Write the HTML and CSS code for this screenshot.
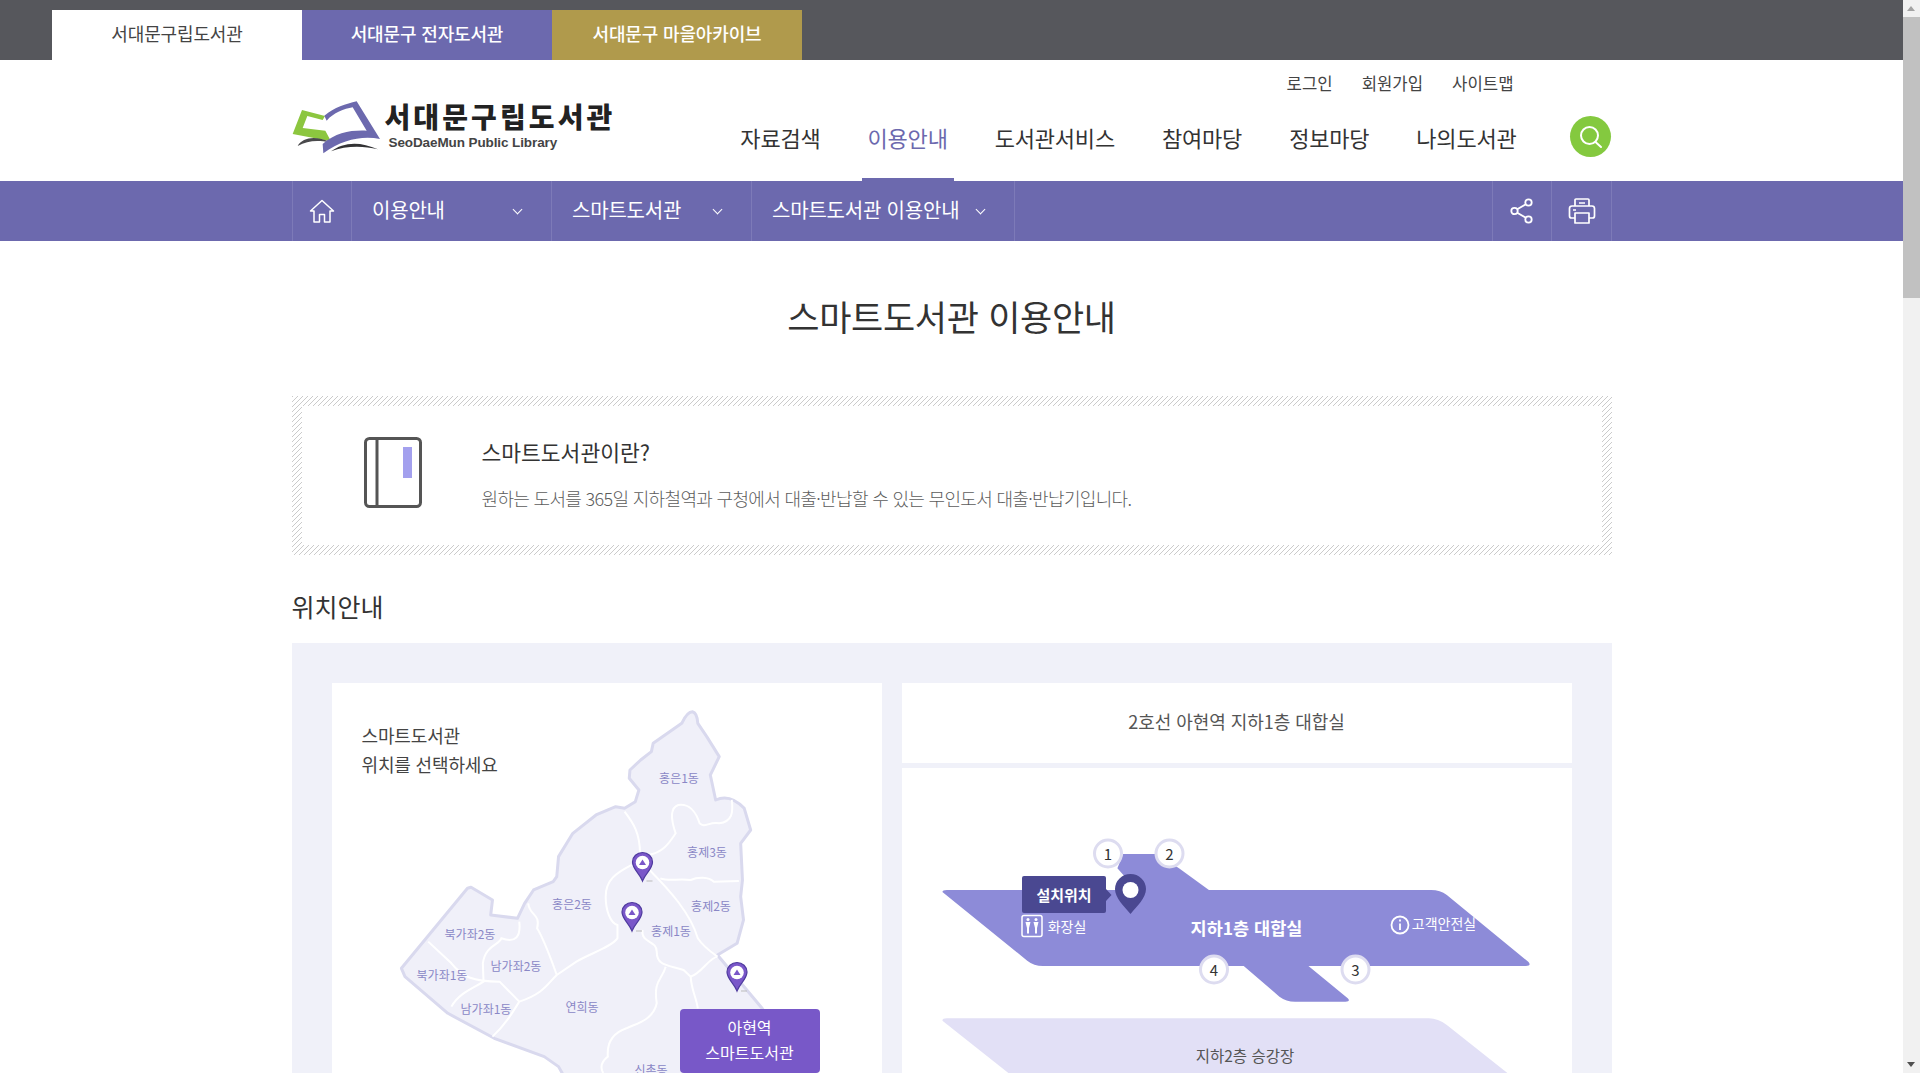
FILE: index.html

```html
<!DOCTYPE html>
<html lang="ko">
<head>
    <meta charset="UTF-8">
    <meta name="viewport" content="width=device-width, initial-scale=1.0">
    <title>스마트도서관 이용안내 - 서대문구립도서관</title>
    <link rel="stylesheet" href="styles.css">
</head>
<body>
<div class="window">
    <div class="page">
        <div class="topbar">
            <a class="top-tab tab-home">서대문구립도서관</a>
            <a class="top-tab tab-ebook">서대문구 전자도서관</a>
            <a class="top-tab tab-archive">서대문구 마을아카이브</a>
        </div>

        <header class="header">
            <a class="logo">
                <svg class="logo-mark" viewBox="38 28 270 165" aria-hidden="true">
                    <path fill="#8cc63f" d="M68 58 L137 76 L130 88 L84 76 L70 112 L138 120 L155 152 L40 130 Z"/>
                    <path fill="#4a4a4c" d="M55 166 C70 140 110 134 152 155 C112 148 85 150 55 166 Z"/>
                    <path fill="#6c69ae" d="M135 75 C165 50 200 40 232 32 L302 145 C250 135 190 145 132 188 L130 160 C170 125 215 118 262 120 L220 50 C195 54 162 67 142 90 Z"/>
                    <path fill="#333335" d="M155 182 C190 155 240 150 296 176 C250 165 200 165 155 182 Z"/>
                </svg>
                <span class="logo-text">
                    <strong>서대문구립도서관</strong>
                    <em>SeoDaeMun Public Library</em>
                </span>
            </a>
            <div class="header-right">
                <ul class="util">
                    <li>로그인</li>
                    <li>회원가입</li>
                    <li>사이트맵</li>
                </ul>
                <div class="gnb-row">
                    <nav class="gnb">
                        <a>자료검색</a>
                        <a class="on">이용안내</a>
                        <a>도서관서비스</a>
                        <a>참여마당</a>
                        <a>정보마당</a>
                        <a>나의도서관</a>
                    </nav>
                    <button class="search-btn" type="button" aria-label="검색">
                        <svg width="28" height="28" viewBox="0 0 28 28" fill="none" stroke="#fff" stroke-width="2" stroke-linecap="round">
                            <circle cx="13.500" cy="12.500" r="8.500"/>
                            <path d="M19.500 19 L25 24"/>
                        </svg>
                    </button>
                </div>
            </div>
        </header>

        <div class="subnav">
            <div class="subnav-inner">
                <a class="sub-icon">
                    <svg width="26" height="24" viewBox="0 0 26 24" fill="none" stroke="#fff" stroke-width="1.5" stroke-linejoin="round">
                        <path d="M1.5 12 L13 1.5 L24.5 12 H21 V23 H15.5 V15.5 H10.5 V23 H5 V12 Z"/>
                    </svg>
                </a>
                <a class="sub-item w200">이용안내<i class="chev"></i></a>
                <a class="sub-item w200">스마트도서관<i class="chev"></i></a>
                <a class="sub-item w263">스마트도서관 이용안내<i class="chev"></i></a>
                <span class="sub-space"></span>
                <a class="sub-icon">
                    <svg width="24" height="26" viewBox="0 0 24 26" fill="none" stroke="#fff" stroke-width="1.8">
                        <circle cx="18.5" cy="4.5" r="3.2"/>
                        <circle cx="4.5" cy="13" r="3.2"/>
                        <circle cx="18.5" cy="21.5" r="3.2"/>
                        <path d="M7.2 11.3 L15.8 6.2 M7.2 14.7 L15.8 19.8"/>
                    </svg>
                </a>
                <a class="sub-icon sub-print">
                    <svg width="28" height="26" viewBox="0 0 28 26" fill="none" stroke="#fff" stroke-width="1.7" stroke-linejoin="round">
                        <path d="M7 8 V2 Q7 1 8 1 H20 Q21 1 21 2 V8"/>
                        <path d="M7 20 H3.5 Q1.5 20 1.5 18 V10.5 Q1.5 8 4 8 H24 Q26.500 8 26.500 10.500 V18 Q26.500 20 24.500 20 H21"/>
                        <path d="M7 15 H21 V25 H7 Z"/>
                        <path d="M11 5 H17 M5 12 H8"/>
                    </svg>
                </a>
            </div>
        </div>

        <main class="content">
            <h2 class="page-title">스마트도서관 이용안내</h2>

            <section class="intro">
                <div class="intro-inner">
                    <svg class="intro-icon" width="58" height="71" viewBox="0 0 58 71" fill="none">
                        <rect x="1.500" y="1.500" width="55" height="68" rx="4" stroke="#555" stroke-width="3"/>
                        <path d="M13 2 V69" stroke="#555" stroke-width="3"/>
                        <rect x="39" y="10" width="9" height="31" fill="#a3a0ee"/>
                    </svg>
                    <div class="intro-text">
                        <h3>스마트도서관이란?</h3>
                        <p>원하는 도서를 365일 지하철역과 구청에서 대출·반납할 수 있는 무인도서 대출·반납기입니다.</p>
                    </div>
                </div>
            </section>

            <h3 class="section-title">위치안내</h3>

            <section class="location">
                <div class="map-card">
                    <p class="map-guide">스마트도서관<br>위치를 선택하세요</p>
                    <svg class="map" width="550" height="700" viewBox="0 0 550 700">
                        <defs>
                            <g id="map-pin">
                                <path d="M4 0 H10" stroke="#bbb" stroke-width="1"/>
                                <path d="M0 0 C-3 -8 -10 -12 -10 -19 A10 9.500 0 1 1 10 -19 C10 -12 3 -8 0 0 Z" fill="#7a57c9" stroke="#4e3a9e" stroke-width="1.200"/>
                                <circle cx="0" cy="-18.500" r="6.800" fill="#fff"/>
                                <path d="M-3.500 -16 L0 -21.500 L3.500 -16 Z" fill="#7a57c9"/>
                            </g>
                        </defs>
                        <g transform="translate(-2 -3) scale(.3571 .3333)">
                            <path fill="#f0f0f9" stroke="#d9d9ee" stroke-width="3" stroke-linejoin="round" vector-effect="non-scaling-stroke"
                                  d="M1015 95 Q1028 98 1030 130 L1055 170 L1090 230 L1065 285 L1080 360 Q1120 340 1160 385 L1178 450 L1150 490 L1155 600 L1150 650 L1158 720 L1140 790 L1085 825 L1210 985 L1400 1300 L640 1300 L650 1179 L640 1160 L600 1130 L460 1075 L330 1000 L210 890 L200 865 L385 625 L395 622 L455 660 L450 705 L525 715 L545 670 L570 630 L625 605 L635 590 L640 530 L680 460 L745 405 L800 380 L825 385 L855 365 L865 330 L838 295 L840 270 L870 240 L900 215 L905 190 L985 130 Q1000 95 1015 95 Z"/>
                            <g fill="none" stroke="#fff" stroke-width="2">
                                <path vector-effect="non-scaling-stroke" d="M825 395 C850 430 868 460 868 520"/>
                                <path vector-effect="non-scaling-stroke" d="M1125 360 C1130 400 1125 425 1090 430 C1060 425 1050 445 1035 430 C1025 395 1005 370 975 375 C950 385 955 420 968 460 C950 490 930 520 890 525"/>
                                <path vector-effect="non-scaling-stroke" d="M845 555 C800 580 772 600 772 650 C772 690 785 730 805 735 L805 775 C790 800 730 820 690 845 L635 885 C610 910 600 940 530 965 C510 1000 490 1035 455 1070"/>
                                <path vector-effect="non-scaling-stroke" d="M895 570 C950 630 1010 700 1030 775 C1045 800 1065 815 1085 830"/>
                                <path vector-effect="non-scaling-stroke" d="M925 595 C950 605 975 595 1010 600 C1030 590 1060 590 1075 605 L1145 603"/>
                                <path vector-effect="non-scaling-stroke" d="M875 750 C870 790 915 780 915 815 C915 860 950 855 990 870 L1010 890 C1040 880 1060 835 1085 830"/>
                                <path vector-effect="non-scaling-stroke" d="M940 860 C930 900 905 900 915 970 C905 1020 860 1030 830 1045 C790 1060 775 1090 778 1130 C760 1145 755 1160 765 1179"/>
                                <path vector-effect="non-scaling-stroke" d="M1010 890 C1012 930 1025 950 1030 985"/>
                                <path vector-effect="non-scaling-stroke" d="M555 670 C560 710 590 700 580 745 C600 780 620 840 635 885"/>
                                <path vector-effect="non-scaling-stroke" d="M530 725 C535 770 520 790 480 775 C475 795 435 795 428 850 L430 905 C400 925 360 940 340 980"/>
                                <path vector-effect="non-scaling-stroke" d="M275 785 L340 850 C370 890 400 905 475 905 L530 965"/>
                            </g>
                        </g>
                        <g class="map-labels">
                            <text x="347" y="94">홍은1동</text>
                            <text x="375" y="168">홍제3동</text>
                            <text x="240" y="220">홍은2동</text>
                            <text x="379" y="222">홍제2동</text>
                            <text x="339" y="247">홍제1동</text>
                            <text x="138" y="250">북가좌2동</text>
                            <text x="184" y="282">남가좌2동</text>
                            <text x="110" y="291">북가좌1동</text>
                            <text x="154" y="325">남가좌1동</text>
                            <text x="250" y="323">연희동</text>
                            <text x="319" y="386">신촌동</text>
                        </g>
                        <use href="#map-pin" x="310.500" y="198"/>
                        <use href="#map-pin" x="300" y="248"/>
                        <use href="#map-pin" x="405" y="308"/>
                    </svg>
                    <a class="map-badge">아현역<br>스마트도서관</a>
                </div>

                <div class="floor-col">
                    <div class="floor-title">2호선 아현역 지하1층 대합실</div>
                    <div class="floor-card">
                        <svg class="floor" width="670" height="640" viewBox="0 0 670 640">
                            <g transform="translate(-2 -88) scale(.4464 .3333)">
                                <path fill="#e2e0f6" d="M95 1022 Q95 1015 105 1015 H1185 Q1205 1015 1225 1035 L1640 1476 H600 L300 1240 Z"/>
                                <path fill="#8d8bd8" d="M95 636 Q95 630 105 630 H530 L487 565 L500 522 H575 L625 565 L692 630 H1190 Q1210 630 1225 645 L1408 846 Q1415 858 1402 858 H915 L1003 955 Q1010 965 998 965 H885 Q865 965 850 950 L770 858 H320 Q300 858 285 842 Z"/>
                            </g>
                            <rect x="120" y="108" width="84" height="37" rx="2" fill="#4a4891"/>
                            <path d="M204 121 L209.500 127 L204 133 Z" fill="#4a4891"/>
                            <text class="floor-tip" x="162" y="126">설치위치</text>
                            <path d="M228.500 146 C222 138 213 130 213 121 A15.500 15 0 1 1 244 121 C244 130 235 138 228.500 146 Z" fill="#4a4891"/>
                            <circle cx="228.500" cy="122" r="8" fill="#fff"/>

                            <rect x="120" y="147.500" width="20" height="21" rx="2" fill="none" stroke="#fff" stroke-width="1.500"/>
                            <g fill="#fff">
                                <circle cx="126" cy="151.500" r="1.500"/>
                                <circle cx="134" cy="151.500" r="1.500"/>
                                <path d="M123.500 154 H128.500 L127 160 V165.500 H125 V160 Z"/>
                                <path d="M131.500 154 H136.500 L135 160 V165.500 H133 V160 Z"/>
                            </g>
                            <text class="floor-sub" x="165" y="158">화장실</text>
                            <text class="floor-main" x="344.500" y="159">지하1층 대합실</text>
                            <circle cx="498" cy="157" r="8.500" fill="none" stroke="#fff" stroke-width="1.800"/>
                            <path d="M498 155.500 V162 M498 151.500 V153.500" stroke="#fff" stroke-width="1.800"/>
                            <text class="floor-sub" x="542" y="155">고객안전실</text>

                            <g class="exit">
                                <circle cx="206" cy="85.500" r="13.500"/>
                                <text x="206" y="85">1</text>
                                <circle cx="267.500" cy="85.500" r="13.500"/>
                                <text x="267.500" y="85">2</text>
                                <circle cx="453.500" cy="201.500" r="13.500"/>
                                <text x="453.500" y="201">3</text>
                                <circle cx="312" cy="201.500" r="13.500"/>
                                <text x="312" y="201">4</text>
                            </g>
                            <text class="floor-lower" x="343" y="287">지하2층 승강장</text>
                        </svg>
                    </div>
                </div>
            </section>
        </main>
    </div>

    <div class="scrollbar">
        <span class="sb-arrow sb-up"></span>
        <span class="sb-thumb"></span>
        <span class="sb-fill"></span>
        <span class="sb-arrow sb-down"></span>
    </div>
</div>
</body>
</html>
```

FILE: styles.css

```css
* {
    margin: 0;
    padding: 0;
    box-sizing: border-box;
}

html, body {
    height: 100%;
    overflow: hidden;
}

body {
    background: #fff;
    color: #333;
    font-family: "Noto Sans CJK KR", "Noto Sans", sans-serif;
}

ul {
    list-style: none;
}

a {
    color: inherit;
    text-decoration: none;
}

.window {
    display: flex;
    height: 1073px;
    overflow: hidden;
}

.page {
    flex: 1;
    min-width: 0;
}

/* top family site tabs */
.topbar {
    display: flex;
    height: 60px;
    padding: 10px 0 0 52px;
    background: #56575c;
}

.top-tab {
    width: 250px;
    height: 50px;
    line-height: 46px;
    text-align: center;
    font-size: 18px;
    letter-spacing: -0.15px;
    color: #fff;
}

.tab-home {
    background: #fff;
    color: #444;
}

.tab-ebook {
    background: #6c69ae;
    font-weight: 500;
}

.tab-archive {
    background: #b09a4c;
    font-weight: 500;
}

/* header */
.header {
    display: flex;
    justify-content: space-between;
    width: 1320px;
    height: 121px;
    margin: 0 auto;
}

.logo {
    display: flex;
    align-items: flex-start;
    gap: 3px;
    padding-top: 40px;
}

.logo-mark {
    width: 90px;
    height: 55px;
}

.logo-text {
    display: flex;
    flex-direction: column;
    padding-top: 1px;
}

.logo-text strong {
    font-size: 28px;
    line-height: 30px;
    font-weight: 900;
    letter-spacing: 3.1px;
    color: #222;
}

.logo-text em {
    margin: 4px 0 0 4px;
    font-family: "Liberation Sans", sans-serif;
    font-style: normal;
    font-weight: 700;
    font-size: 13.5px;
    line-height: 16px;
    letter-spacing: -0.1px;
    color: #444;
}

.header-right {
    display: flex;
    flex-direction: column;
    align-items: flex-end;
}

.util {
    display: flex;
    gap: 29px;
    height: 56px;
    margin-right: 98px;
    padding-top: 10px;
    font-size: 16.7px;
    line-height: 26px;
    color: #444;
}

.gnb-row {
    display: flex;
    align-items: flex-start;
}

.gnb {
    display: flex;
    gap: 35px;
    height: 65px;
    margin-right: 47px;
}

.gnb a {
    height: 65px;
    padding: 0 6px;
    font-size: 22px;
    line-height: 42px;
    letter-spacing: -0.2px;
    color: #333;
}

.gnb a.on {
    color: #6c69ae;
    border-bottom: 3px solid #6c69ae;
}

.search-btn {
    display: flex;
    align-items: center;
    justify-content: center;
    width: 41px;
    height: 41px;
    margin-right: 1px;
    border: 0;
    border-radius: 50%;
    background: #84c93f;
}

/* location bar */
.subnav {
    height: 60px;
    background: #6c69ae;
}

.subnav-inner {
    display: flex;
    width: 1320px;
    height: 60px;
    margin: 0 auto;
    border-right: 1px solid #7d7ab8;
    color: #fff;
}

.sub-icon {
    display: flex;
    align-items: center;
    justify-content: center;
    width: 59.500px;
    border-left: 1px solid #7d7ab8;
}

.sub-print {
    padding-left: 2px;
}

.sub-item {
    display: flex;
    align-items: center;
    justify-content: space-between;
    padding: 0 30px 3px 20px;
    border-left: 1px solid #7d7ab8;
    font-size: 20px;
    line-height: 56px;
    letter-spacing: -0.2px;
}

.w200 {
    width: 200px;
}

.w263 {
    width: 263px;
}

.sub-space {
    flex: 1;
    border-left: 1px solid #7d7ab8;
}

.chev {
    width: 7px;
    height: 7px;
    border-right: 1.500px solid #fff;
    border-bottom: 1.500px solid #fff;
    transform: rotate(45deg);
}

/* content */
.content {
    width: 1320px;
    margin: 0 auto;
}

.page-title {
    padding: 50px 0 55px;
    text-align: center;
    font-size: 35px;
    line-height: 50px;
    font-weight: 400;
    letter-spacing: -0.3px;
    color: #333;
}

.intro {
    height: 159px;
    padding: 10px;
    background: repeating-linear-gradient(135deg, #cbcbcb 0, #cbcbcb .8px, #fff .8px, #fff 3.536px);
}

.intro-inner {
    display: flex;
    align-items: center;
    gap: 60px;
    height: 139px;
    padding-left: 62px;
    background: #fff;
}

.intro-icon {
    margin-bottom: 6px;
}

.intro-text {
    margin-bottom: 2px;
}

.intro-inner h3 {
    font-size: 21.5px;
    line-height: 30px;
    font-weight: 400;
    color: #333;
}

.intro-inner p {
    margin-top: 16px;
    font-size: 18px;
    line-height: 30px;
    font-weight: 300;
    letter-spacing: -0.67px;
    color: #5c5c5c;
}

.section-title {
    margin: 33px 0 19px;
    font-size: 25px;
    line-height: 36px;
    font-weight: 400;
    color: #333;
}

.location {
    display: flex;
    gap: 20px;
    padding: 40px;
    background: #f0f1f9;
}

.map-card {
    position: relative;
    width: 550px;
    height: 700px;
    padding: 38px 30px;
    background: #fff;
}

.map-guide {
    position: relative;
    z-index: 1;
    font-size: 18px;
    line-height: 29px;
    letter-spacing: -0.15px;
    color: #444;
}

.map {
    position: absolute;
    left: 0;
    top: 0;
}

.map-labels text {
    font-size: 12px;
    fill: #8a87c6;
    text-anchor: middle;
    dominant-baseline: central;
}

.map-badge {
    position: absolute;
    left: 348px;
    top: 326px;
    width: 140px;
    height: 64px;
    padding-top: 6px;
    border-radius: 4px;
    background: #7858c8;
    color: #fff;
    text-align: center;
    font-size: 16px;
    line-height: 25px;
}

.floor-col {
    display: flex;
    flex: 1;
    flex-direction: column;
    gap: 5px;
}

.floor-title {
    height: 80px;
    background: #fff;
    text-align: center;
    font-size: 18px;
    line-height: 76px;
    letter-spacing: -0.05px;
    color: #555;
}

.floor-card {
    flex: 1;
    background: #fff;
    overflow: hidden;
}

.floor {
    display: block;
}

.floor text {
    text-anchor: middle;
    dominant-baseline: central;
}

.floor .floor-tip {
    font-size: 15px;
    font-weight: 700;
    fill: #fff;
}

.floor .floor-sub {
    font-size: 14px;
    fill: #fff;
}

.floor .floor-main {
    font-size: 17.500px;
    font-weight: 700;
    fill: #fff;
}

.floor .floor-lower {
    font-size: 15.500px;
    fill: #555;
}

.exit circle {
    fill: #fff;
    stroke: #dddcf0;
    stroke-width: 3;
}

.exit text {
    font-size: 15px;
    fill: #333;
}

/* browser scrollbar */
.scrollbar {
    display: flex;
    flex-direction: column;
    width: 17px;
    background: #f1f1f1;
}

.sb-arrow {
    position: relative;
    height: 17px;
}

.sb-up::after,
.sb-down::after {
    content: "";
    position: absolute;
    left: 4px;
    border-left: 4.500px solid transparent;
    border-right: 4.500px solid transparent;
}

.sb-up::after {
    top: 6px;
    border-bottom: 5px solid #a3a3a3;
}

.sb-down::after {
    top: 6px;
    border-top: 5px solid #505050;
}

.sb-thumb {
    height: 281px;
    background: #c1c1c1;
}

.sb-fill {
    flex: 1;
}
```
